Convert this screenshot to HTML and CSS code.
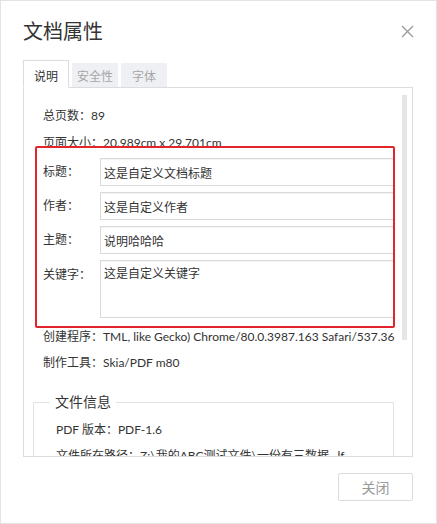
FILE: index.html
```
<!DOCTYPE html>
<html lang="zh-CN">
<head>
    <meta charset="UTF-8">
    <meta name="viewport" content="width=device-width, initial-scale=1.0">
    <title>文档属性</title>
    <link rel="stylesheet" href="styles.css">
</head>
<body>
    <div class="dialog">
        <div class="dialog-header">
            <h1 class="dialog-title">文档属性</h1>
            <svg class="close-icon" width="13" height="13" viewBox="0 0 13 13">
                <path d="M1 1 L12 12 M12 1 L1 12" stroke="#9a9a9a" stroke-width="1.3" fill="none"/>
            </svg>
        </div>

        <div class="tabs">
            <div class="tab active">说明</div>
            <div class="tab">安全性</div>
            <div class="tab">字体</div>
        </div>

        <div class="panel">
            <div class="panel-body">
                <div class="info-line">总页数：89</div>
                <div class="info-line">页面大小：20.989cm x 29.701cm</div>

                <div class="highlight-box">
                    <div class="field-row">
                        <label class="field-label" for="title">标题：</label>
                        <input class="field-input" id="title" type="text" value="这是自定义文档标题">
                    </div>
                    <div class="field-row">
                        <label class="field-label" for="author">作者：</label>
                        <input class="field-input" id="author" type="text" value="这是自定义作者">
                    </div>
                    <div class="field-row">
                        <label class="field-label" for="subject">主题：</label>
                        <input class="field-input" id="subject" type="text" value="说明哈哈哈">
                    </div>
                    <div class="field-row top">
                        <label class="field-label" for="keywords">关键字：</label>
                        <textarea class="field-input field-textarea" id="keywords">这是自定义关键字</textarea>
                    </div>
                </div>

                <div class="info-line after-box">创建程序：TML, like Gecko) Chrome/80.0.3987.163 Safari/537.36</div>
                <div class="info-line">制作工具：Skia/PDF m80</div>

                <fieldset class="file-info">
                    <legend>文件信息</legend>
                    <div class="info-line">PDF 版本：PDF-1.6</div>
                    <div class="info-line">文件所在路径：Z:\我的ABC测试文件\一份有三数据...lf</div>
                </fieldset>
            </div>
            <div class="scrollbar"><div class="scroll-thumb"></div></div>
        </div>

        <div class="dialog-footer">
            <button class="btn-close" type="button">关闭</button>
        </div>
    </div>
</body>
</html>
```

FILE: styles.css
```
body {
    margin: 0;
    font-family: 'Lato', 'Noto Sans CJK SC', sans-serif;
    color: #333;
    background: #fff;
}
.dialog {
    width: 437px;
    height: 524px;
    box-sizing: border-box;
    border: 1px solid #e3e3e3;
    padding: 16px 23px 0 22px;
    background: #fff;
}
.dialog-header {
    display: flex;
    justify-content: space-between;
    align-items: center;
    height: 28px;
    margin-bottom: 15px;
}
.dialog-title {
    margin: 0;
    font-size: 20px;
    line-height: 28px;
    font-weight: normal;
    color: #333;
}
.close-icon {
    margin-right: -1px;
}

/* tabs */
.tabs {
    display: flex;
    align-items: flex-end;
    gap: 3px;
    height: 27px;
}
.tab {
    width: 46px;
    height: 24px;
    box-sizing: border-box;
    display: flex;
    align-items: center;
    justify-content: center;
    font-size: 12px;
    color: #a6a6a6;
    background: #eef0f3;
}
.tab.active {
    position: relative;
    z-index: 1;
    height: 28px;
    margin-bottom: -1px;
    padding-top: 3px;
    color: #333;
    background: #fff;
    border: 1px solid #dcdcdc;
    border-bottom-color: #fff;
}

/* panel */
.panel {
    display: flex;
    height: 370px;
    box-sizing: border-box;
    border: 1px solid #dcdcdc;
    overflow: hidden;
}
.panel-body {
    flex: 1;
    min-width: 0;
    padding: 14px 0 0 9px;
    overflow: hidden;
    font-size: 12px;
}
.scrollbar {
    width: 5px;
    margin: 7px 5px 0 5px;
}
.scroll-thumb {
    height: 245px;
    background: #e6e6e6;
}
.info-line {
    padding-left: 10px;
    line-height: 27px;
    white-space: nowrap;
}
.info-line.after-box {
    margin-top: -4px;
    line-height: 26px;
}
.info-line.after-box + .info-line {
    line-height: 26px;
}

/* red annotation box */
.highlight-box {
    position: relative;
    width: 360px;
    box-sizing: border-box;
    margin: -10px 0 0 2px;
    padding: 10px 0 8px 6px;
    border: 2px solid #e1252b;
    border-radius: 2px;
    overflow: hidden;
}
.field-row {
    display: flex;
    align-items: center;
    margin-bottom: 6px;
}
.field-row:last-child {
    margin-bottom: 0;
}
.field-row.top {
    align-items: flex-start;
}
.field-label {
    width: 57px;
    flex-shrink: 0;
    font-size: 12px;
    line-height: 16px;
}
.field-row.top .field-label {
    padding-top: 7px;
}
.field-input {
    flex: 1;
    min-width: 0;
    height: 28px;
    margin: 0 -6px 0 0;
    padding: 0 3px;
    box-sizing: border-box;
    border: 1px solid #d9d9d9;
    box-shadow: inset 0 1px 1px rgba(0, 0, 0, 0.04);
    font-family: inherit;
    font-size: 12px;
    color: #333;
    background: #fff;
    outline: none;
}
.field-textarea {
    height: 58px;
    padding-top: 5px;
    line-height: 16px;
    resize: none;
}

/* file info group */
.file-info {
    width: 361px;
    min-width: 0;
    box-sizing: border-box;
    margin: 16px 0 0 0;
    padding: 5px 0 0 16px;
    border: 1px solid #e3e3e3;
}
.file-info legend {
    padding: 0 5px;
    font-size: 14px;
    line-height: 20px;
    color: #333;
}
.file-info .info-line {
    padding-left: 6px;
    line-height: 26px;
}

/* footer */
.dialog-footer {
    display: flex;
    justify-content: flex-end;
    margin-top: 16px;
}
.btn-close {
    width: 75px;
    height: 28px;
    border: 1px solid #dcdcdc;
    border-radius: 2px;
    background: #fff;
    font-family: inherit;
    font-size: 14px;
    color: #999;
    cursor: pointer;
}
```
